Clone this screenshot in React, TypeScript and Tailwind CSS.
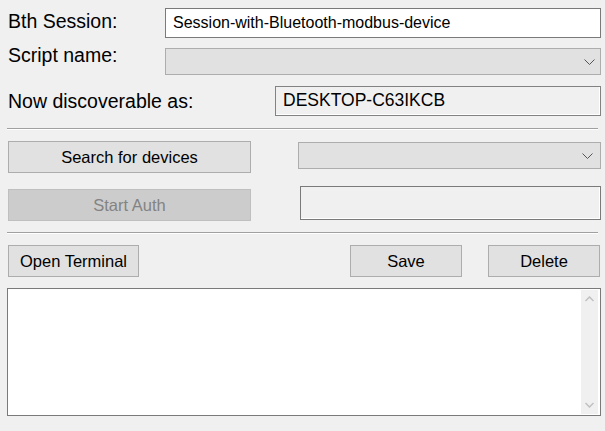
const Chevron = ({ className = "" }: { className?: string }) => (
  <svg className={className} width="11" height="6" viewBox="0 0 11 6" fill="none">
    <path d="M0.5 0.5L5.5 5.5L10.5 0.5" stroke="#555555" strokeWidth="1" />
  </svg>
);

const Separator = () => (
  <div className="-ml-[1px] w-[591px] border-t border-b border-t-[#a0a0a0] border-b-white" />
);

const Btn = ({
  label,
  className = "",
  disabled = false,
}: {
  label: string;
  className?: string;
  disabled?: boolean;
}) => (
  <button
    disabled={disabled}
    className={
      "h-[32px] border text-[16.5px] leading-none " +
      (disabled
        ? "bg-[#cccccc] border-[#bfbfbf] text-[#838383] "
        : "bg-[#e1e1e1] border-[#adadad] text-black ") +
      className
    }
  >
    {label}
  </button>
);

export default function App() {
  return (
    <div className="w-[605px] h-[431px] bg-[#f0f0f0] pl-[8px] flex flex-col font-['Liberation_Sans',Arial,sans-serif] text-black overflow-hidden">
      {/* Bth session */}
      <div className="mt-[8px] flex h-[30px]">
        <span className="w-[157px] mt-[2px] text-[19.5px] leading-[22px]">Bth Session:</span>
        <div className="w-[436px] h-full border border-[#7a7a7a] bg-white pl-[7px] flex items-center text-[16px]">
          Session-with-Bluetooth-modbus-device
        </div>
      </div>

      {/* Script name */}
      <div className="mt-[6px] flex h-[31px]">
        <span className="w-[157px] text-[19.5px] leading-[22px]">Script name:</span>
        <div className="mt-[4px] w-[436px] h-[27px] border border-[#adadad] bg-[#e1e1e1] flex items-center justify-end pr-[5px]">
          <Chevron />
        </div>
      </div>

      {/* Discoverable */}
      <div className="mt-[11px] flex items-center h-[30px]">
        <span className="w-[267px] text-[19.5px] leading-[22px]">Now discoverable as:</span>
        <div className="w-[326px] h-full border border-[#828282] shadow-[inset_-1px_-1px_0_white] pl-[7px] pt-[2px] text-[17.5px] leading-[22px]">
          DESKTOP-C63IKCB
        </div>
      </div>

      <div className="mt-[12px]">
        <Separator />
      </div>

      {/* Search */}
      <div className="mt-[11px] flex h-[32px]">
        <Btn label="Search for devices" className="w-[243px]" />
        <div className="ml-[47px] mt-[1px] w-[303px] h-[27px] border border-[#adadad] bg-[#e1e1e1] flex items-center justify-end pr-[7px]">
          <Chevron />
        </div>
      </div>

      {/* Auth */}
      <div className="mt-[13px] flex h-[35px]">
        <Btn label="Start Auth" className="w-[243px] mt-[3px]" disabled />
        <div className="ml-[49px] w-[301px] h-[34px] border border-[#7a7a7a] shadow-[inset_-1px_-1px_0_white] bg-[#f0f0f0]" />
      </div>

      <div className="mt-[11px]">
        <Separator />
      </div>

      {/* Actions */}
      <div className="mt-[11px] flex h-[32px]">
        <Btn label="Open Terminal" className="w-[131px]" />
        <Btn label="Save" className="ml-[211px] w-[112px]" />
        <Btn label="Delete" className="ml-[26px] w-[112px]" />
      </div>

      {/* Terminal output */}
      <div className="mt-[11px] -ml-[1px] w-[594px] h-[128px] border border-[#7a7a7a] bg-white flex justify-end py-[1px] pr-[2px]">
        <div className="w-[17px] h-full bg-[#f0f0f0] flex flex-col items-center justify-between py-[6px]">
          <svg width="9" height="6" viewBox="0 0 9 6" fill="none">
            <path d="M0.5 5L4.5 1L8.5 5" stroke="#c0c0c0" strokeWidth="1.5" />
          </svg>
          <svg width="9" height="6" viewBox="0 0 9 6" fill="none">
            <path d="M0.5 1L4.5 5L8.5 1" stroke="#c0c0c0" strokeWidth="1.5" />
          </svg>
        </div>
      </div>
    </div>
  );
}
